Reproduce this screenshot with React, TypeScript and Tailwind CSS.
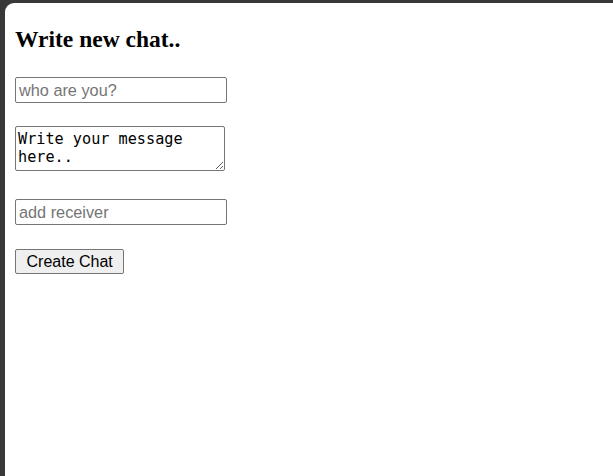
import React, { useState } from 'react';

const App: React.FC = () => {
  const [author, setAuthor] = useState('');
  const [message, setMessage] = useState('Write your message here..');
  const [receiver, setReceiver] = useState('');

  return (
    <div className="w-full h-[476px] bg-[#383838] pl-[5px] pt-[3px] overflow-hidden">
      <div className="h-full bg-white rounded-tl-[9px] pl-[10px] pt-[23px]">
        <h2 className="font-['Liberation_Serif',serif] font-bold text-[23.5px] leading-[27px] text-black mb-[24px]">
          Write new chat..
        </h2>
        <form className="flex flex-col items-start font-['Liberation_Sans',Arial,sans-serif]" onSubmit={e => e.preventDefault()}>
          <input
            value={author}
            onChange={e => setAuthor(e.target.value)}
            placeholder="who are you?"
            className="w-[212px] h-[26px] border border-[#767676] rounded-[2px] px-[3px] text-[16.3px] text-black placeholder:text-[#757575] outline-none"
          />
          <textarea
            value={message}
            onChange={e => setMessage(e.target.value)}
            className="mt-[23px] w-[210px] h-[45px] border border-[#767676] rounded-[2px] px-[2px] pt-[3px] font-['DejaVu_Sans_Mono',monospace] text-[15.2px] leading-[18px] text-black outline-none resize"
          />
          <input
            value={receiver}
            onChange={e => setReceiver(e.target.value)}
            placeholder="add receiver"
            className="mt-[28px] w-[212px] h-[26px] border border-[#767676] rounded-[2px] px-[3px] text-[16.3px] text-black placeholder:text-[#757575] outline-none"
          />
          <button
            type="submit"
            className="mt-[24px] h-[25px] px-[10.5px] bg-[#efefef] border border-[#767676] rounded-[2px] text-[16px] leading-[20px] text-black"
          >
            Create Chat
          </button>
        </form>
      </div>
    </div>
  );
};

export default App;
